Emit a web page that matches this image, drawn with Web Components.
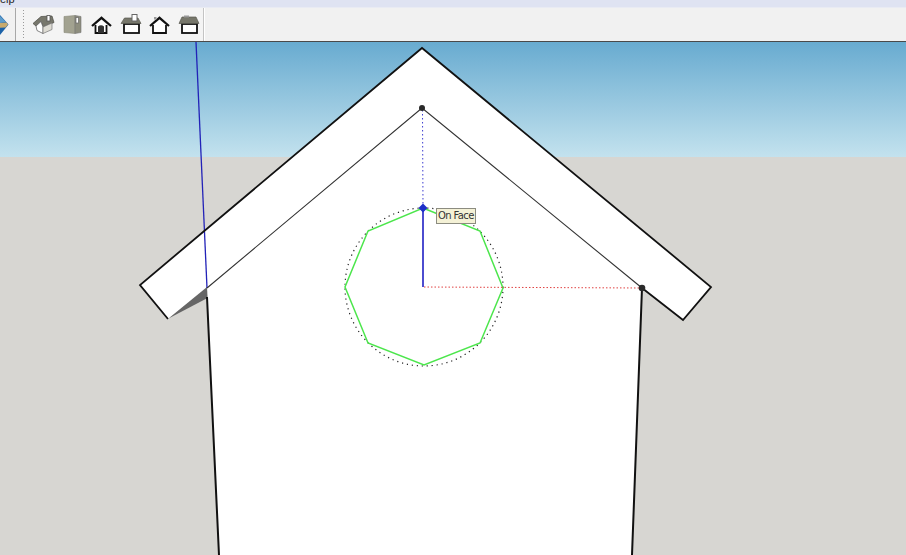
<!DOCTYPE html>
<html>
<head>
<meta charset="utf-8">
<title>SketchUp</title>
<style>
  html, body { margin: 0; height: 100%; overflow: hidden; }
  body { font-family: "Liberation Sans", Arial, sans-serif; }
</style>
</head>
<body>
<app-window>
  <menu-strip slot="menu">elp</menu-strip>
  <tool-strip slot="tools">
    <tool-icon name="iso"></tool-icon>
    <tool-icon name="top"></tool-icon>
    <tool-icon name="front"></tool-icon>
    <tool-icon name="right"></tool-icon>
    <tool-icon name="back"></tool-icon>
    <tool-icon name="left"></tool-icon>
  </tool-strip>
  <model-view slot="view">On Face</model-view>
</app-window>

<script>
class AppWindow extends HTMLElement {
  constructor() {
    super();
    this.attachShadow({ mode: 'open' });
    this.shadowRoot.innerHTML = `
      <style>
        :host {
          display: flex;
          flex-direction: column;
          width: 906px;
          height: 555px;
          overflow: hidden;
        }
      </style>
      <slot name="menu"></slot>
      <slot name="tools"></slot>
      <slot name="view"></slot>
    `;
  }
}

class MenuStrip extends HTMLElement {
  constructor() {
    super();
    this.attachShadow({ mode: 'open' });
    this.shadowRoot.innerHTML = `
      <style>
        :host {
          display: block;
          height: 7px;
          flex: none;
          overflow: hidden;
          background: #dfe3f2;
          border-bottom: 1px solid #e9ebf3;
          color: #222;
          font: 11px/12px "Liberation Sans", Arial, sans-serif;
        }
        span { display: block; margin-top: -7px; }
      </style>
      <span><slot></slot></span>
    `;
  }
}

class ToolStrip extends HTMLElement {
  constructor() {
    super();
    this.attachShadow({ mode: 'open' });
    this.shadowRoot.innerHTML = `
      <style>
        :host {
          display: flex;
          height: 33px;
          flex: none;
          background: #f1f1f1;
          border-bottom: 1px solid #4a4a4a;
        }
        .stub {
          width: 16px;
          flex: none;
          display: flex;
          align-items: center;
          border-right: 1px solid #a8a8a8;
          box-sizing: border-box;
        }
        .stub svg { display: block; }
        .group {
          display: flex;
          align-items: center;
          width: 188px;
          flex: none;
          box-sizing: border-box;
          padding-left: 14px;
          gap: 1px;
          background: #f4f4f4;
          border-right: 1px solid #c4c4c4;
          box-shadow: 1px 0 0 #fff;
          position: relative;
        }
        .grip {
          position: absolute;
          left: 7px;
          top: 2px;
          bottom: 3px;
          width: 1px;
          background: repeating-linear-gradient(#9a9a9a 0 1px, transparent 1px 3px);
        }
      </style>
      <div class="stub">
        <svg width="15" height="24" viewBox="0 0 15 24">
          <path d="M-8 12 L0 2 L8.500 11.500 L0 22 Z" fill="#1b62a8"/>
          <path d="M-6 9 L0 3 L6 9 L0 10 Z" fill="#5c9ccb"/>
          <path d="M-4 10.500 L6.500 9.500 L8 11.500 L5.500 14.500 L-2 15 Z" fill="#c8aa6c"/>
        </svg>
      </div>
      <div class="group">
        <div class="grip"></div>
        <slot></slot>
      </div>
    `;
  }
}

const ICONS = {
  iso: `
    <path d="M3 11.500 L11 4.500 L22 4 L24 10.500 L13 15 L11 9.500 L6 14 Z" fill="#77776c" stroke="#4a4a44" stroke-width=".7"/>
    <path d="M6 14 L11 9.500 L13 15 L13 21.500 L7 18.500 Z" fill="#fff" stroke="#666" stroke-width=".8"/>
    <path d="M13 15 L22 11 L22 17.500 L13 21.500 Z" fill="#dedcd4" stroke="#777" stroke-width=".7"/>
    <rect x="17" y="3.500" width="3" height="5.500" fill="#fff" stroke="#555" stroke-width=".8"/>`,
  top: `
    <path d="M5 4.500 L16 3.500 L16 21.500 L5 20.500 Z" fill="#a2a290" stroke="#8a8a7a" stroke-width=".6"/>
    <path d="M16 3.500 L22 4.500 L22 20.500 L16 21.500 Z" fill="#8e8e7e" stroke="#777" stroke-width=".6"/>
    <rect x="17" y="5.500" width="2.500" height="5.500" fill="#fff" stroke="#666" stroke-width=".7"/>`,
  front: `
    <path d="M7.500 12.500 L13 8 L18.500 12.500 L18.500 21 L7.500 21 Z" fill="#fff"/>
    <path d="M4.500 14 L14 5.800 L23.500 14" fill="none" stroke="#111" stroke-width="2.300" transform="translate(-.5 0)"/>
    <path d="M7.500 13 L7.500 21 L18.500 21 L18.500 13" fill="none" stroke="#111" stroke-width="1.800"/>
    <path d="M10 21 L10 14.500 Q13 12 16 14.500 L16 21 Z" fill="#333"/>`,
  right: `
    <rect x="7" y="12" width="15" height="9" fill="#fff" stroke="#111" stroke-width="1.800"/>
    <path d="M4 11.500 L7.500 6 L21 6 L24 11.500 Z" fill="#77776b" stroke="#5a5a52" stroke-width=".7"/>
    <rect x="15" y="2.500" width="5" height="6.500" fill="#fff" stroke="#666" stroke-width="1"/>`,
  back: `
    <path d="M7 12.500 L13.500 8 L20 12.500 L20 21 L7 21 Z" fill="#fff"/>
    <path d="M4 14 L13.500 5.800 L23 14" fill="none" stroke="#111" stroke-width="2.200"/>
    <path d="M7 13 L7 21 L20 21 L20 13" fill="none" stroke="#111" stroke-width="1.800"/>
    <rect x="8" y="5" width="2.500" height="2.500" fill="#999"/>`,
  left: `
    <rect x="7" y="12" width="15" height="9" fill="#fff" stroke="#111" stroke-width="1.800"/>
    <path d="M4 11.500 L7 5 L21 5 L24 11.500 Z" fill="#77776b" stroke="#5a5a52" stroke-width=".7"/>
    <rect x="9" y="3.500" width="5" height="2" fill="#999"/>`,
};

class ToolIcon extends HTMLElement {
  constructor() {
    super();
    this.attachShadow({ mode: 'open' });
  }

  connectedCallback() {
    const name = this.getAttribute('name');
    this.shadowRoot.innerHTML = `
      <style>
        :host { display: block; width: 28px; height: 26px; flex: none; }
        svg { display: block; }
      </style>
      <svg width="28" height="26" viewBox="0 0 28 26">${ICONS[name]}</svg>
    `;
  }
}

class ModelView extends HTMLElement {
  constructor() {
    super();
    this.attachShadow({ mode: 'open' });
    this.shadowRoot.innerHTML = `
      <style>
        :host {
          display: flex;
          flex-direction: column;
          flex: 1;
          position: relative;
          overflow: hidden;
        }
        .sky {
          height: 115px;
          flex: none;
          background: linear-gradient(#68abd0, #c3e2ee);
        }
        .ground { flex: 1; background: #d7d6d2; }
        svg { position: absolute; left: 0; top: 0; }
        .tip {
          position: absolute;
          left: 436px;
          top: 166px;
          height: 14px;
          padding: 0 1px;
          background: #f4f1d6;
          border: 1px solid #8c8c80;
          color: #333;
          font: 10px/14px "DejaVu Sans", "Liberation Sans", sans-serif;
          letter-spacing: -.6px;
          white-space: nowrap;
        }
      </style>
      <div class="sky"></div>
      <div class="ground"></div>
      <svg width="906" height="513" viewBox="0 42 906 513">
        <!-- house face -->
        <path d="M422 48 L711 287 L683 320 L642 288 L632 555 L219 555 L207 288 L168 319 L140 285 Z" fill="#fff"/>
        <path d="M168.500 318.500 L207 287 L207.500 298 Z" fill="#666"/>

        <!-- guide and inference lines -->
        <path d="M196 42 L207 288" stroke="#2222b8" stroke-width="1.300" fill="none"/>
        <path d="M207 288 L422 108 L642 288" stroke="#333" stroke-width="1.100" fill="none"/>

        <!-- outline -->
        <path d="M207 297 L219 555 M642 288 L632 555" stroke="#111" stroke-width="2" fill="none"/>
        <path d="M168 319 L140 285 L422 48 L711 287 L683 320 L642 288" stroke="#111" stroke-width="1.800" fill="none"/>

        <!-- circle being drawn -->
        <circle cx="424" cy="287" r="79" fill="none" stroke="#222" stroke-width="1.200" stroke-dasharray="1.200 3.800"/>
        <path d="M423 208 L480 231 L503 288 L480 343 L424 365 L368 343 L345 287 L368 231 Z" fill="none" stroke="#4ce64c" stroke-width="1.500"/>
        <path d="M423 208 L423 287" stroke="#2020c4" stroke-width="1.600"/>
        <path d="M422.500 110 L423 207" stroke="#3a3ad0" stroke-width="1" stroke-dasharray="1.500 2.500"/>
        <path d="M424 287 L642 288" stroke="#e04040" stroke-width="1" stroke-dasharray="1.500 2"/>

        <!-- snap points -->
        <circle cx="422" cy="108" r="3" fill="#2a2a2a"/>
        <circle cx="642" cy="288" r="3.300" fill="#2a2a2a"/>
        <path d="M423 203.500 L427.500 208 L423 212.500 L418.500 208 Z" fill="#1c2fc8"/>
      </svg>
      <div class="tip"><slot></slot></div>
    `;
  }
}

customElements.define('app-window', AppWindow);
customElements.define('menu-strip', MenuStrip);
customElements.define('tool-strip', ToolStrip);
customElements.define('tool-icon', ToolIcon);
customElements.define('model-view', ModelView);
</script>
</body>
</html>
